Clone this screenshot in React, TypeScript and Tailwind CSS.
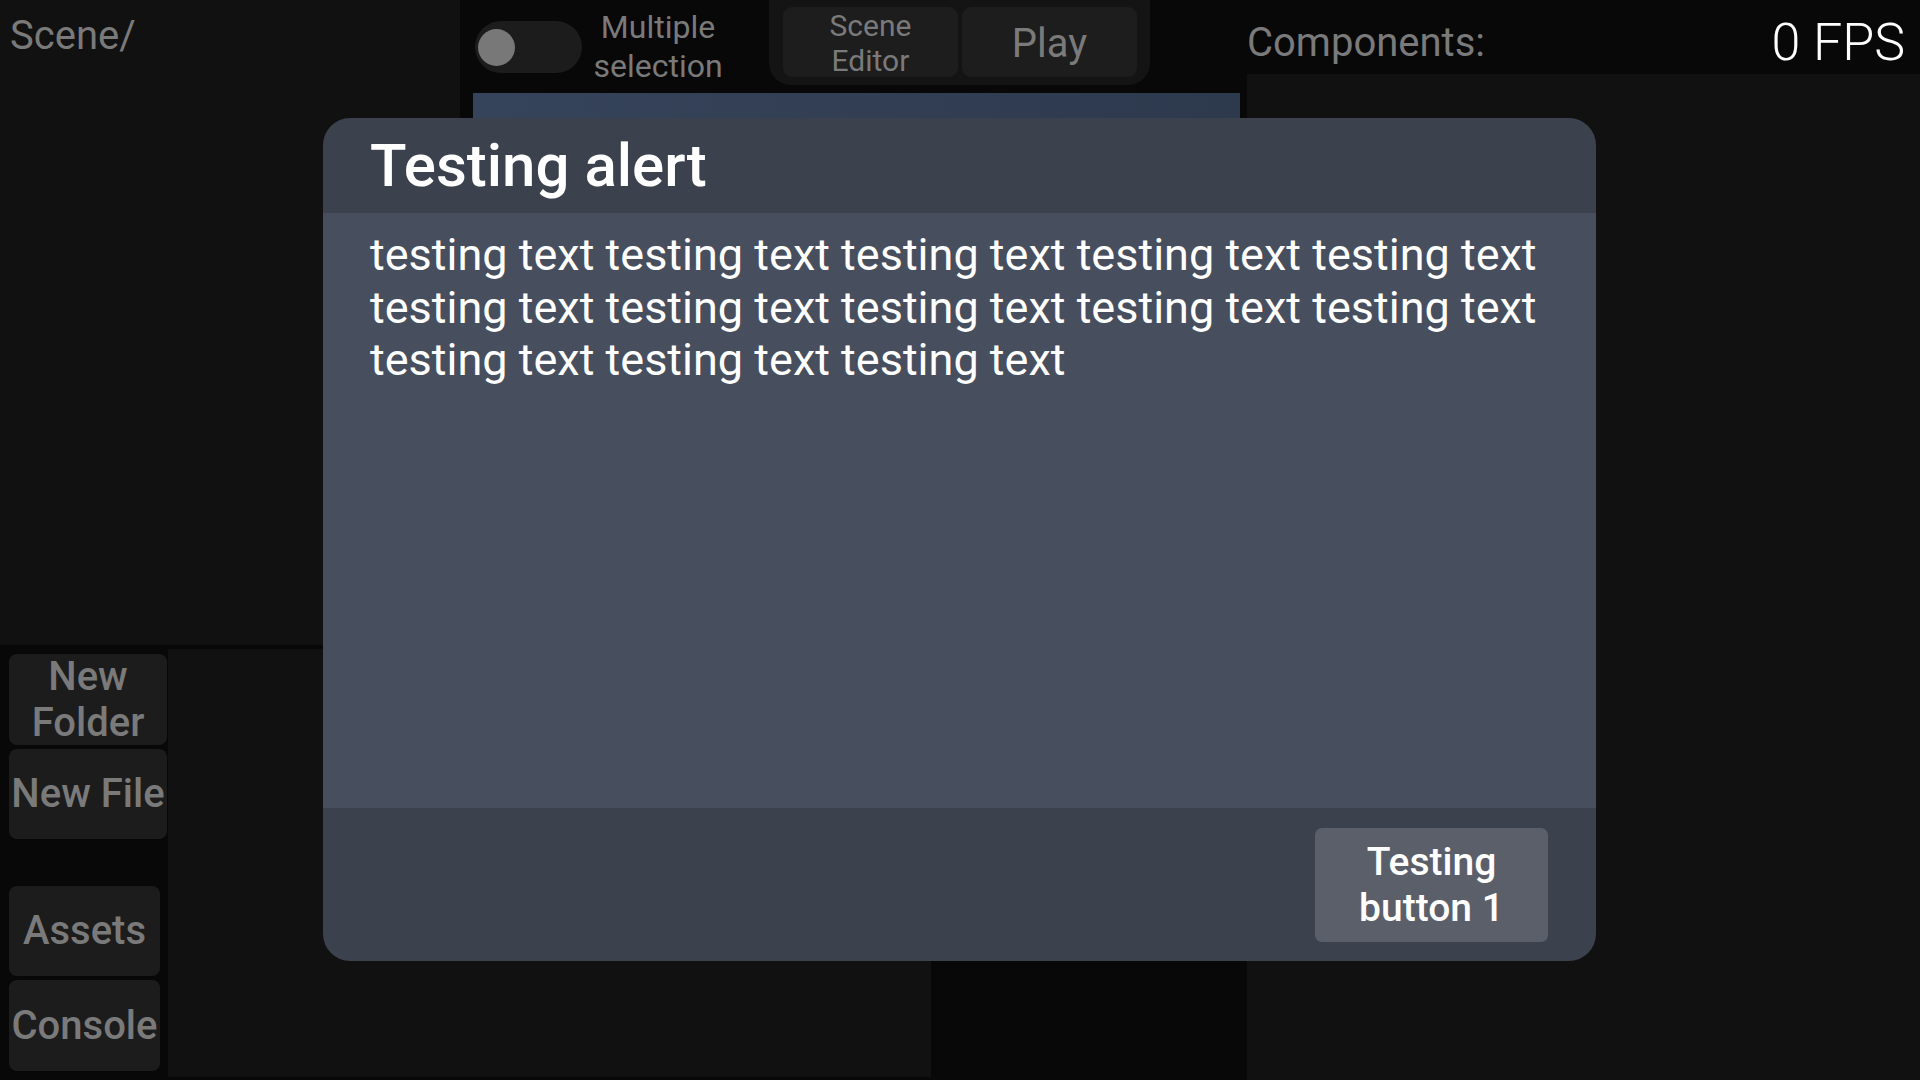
import React from "react";

export default function App() {
  const body =
    "testing text testing text testing text testing text testing text testing text testing text testing text testing text testing text testing text testing text testing text";
  return (
    <div className="relative flex h-[1080px] w-[1920px] overflow-hidden bg-[#080808] font-['Roboto',sans-serif]">
      {/* Left + center area */}
      <div className="flex w-[1245px] flex-col">
        <div className="flex h-[645px]">
          {/* Scene tree */}
          <div className="w-[460px] bg-[#111111] pl-[10px] pt-[10px] text-[40px] leading-[52px] text-[#7a7a7a]">
            Scene/
          </div>
          {/* Center column */}
          <div className="flex flex-1 flex-col pl-[13px] pr-[5px]">
            <div className="flex h-[93px] items-start">
              <div className="ml-[2px] mt-[21px] flex h-[52px] w-[107px] items-center rounded-full bg-[#1c1c1c] pl-[3px]">
                <div className="h-[37px] w-[37px] rounded-full bg-[#787878]" />
              </div>
              <div className="ml-[11px] mt-[8px] w-[130px] text-center text-[32px] leading-[39px] text-[#7a7a7a]">
                Multiple selection
              </div>
              <div className="ml-[46px] flex h-[85px] gap-[4px] rounded-b-[22px] bg-[#141414] pl-[14px] pr-[13px] pt-[7px] pb-[8px]">
                <div className="flex w-[175px] items-center justify-center rounded-[9px] bg-[#1d1d1d] pt-[1px] text-center text-[30px] leading-[35px] text-[#7a7a7a]">
                  Scene
                  <br />
                  Editor
                </div>
                <div className="flex w-[175px] items-center justify-center rounded-[9px] bg-[#1d1d1d] pt-[3px] text-[40px] text-[#7a7a7a]">
                  Play
                </div>
              </div>
            </div>
            <div className="flex-1 bg-linear-to-r from-[#36445b] to-[#2d394d]" />
          </div>
        </div>
        <div className="mt-[4px] flex flex-1 pb-[3px]">
          {/* Sidebar */}
          <div className="flex w-[168px] flex-col pl-[9px] pt-[5px]">
            <div className="flex h-[91px] w-[158px] items-center justify-center rounded-[8px] bg-[#1c1c1c] text-center text-[40px] font-medium leading-[46px] text-[#7a7a7a]">
              New
              <br />
              Folder
            </div>
            <div className="mt-[4px] flex h-[90px] w-[158px] items-center justify-center rounded-[8px] bg-[#1c1c1c] text-[40px] font-medium text-[#7a7a7a]">
              New File
            </div>
            <div className="mt-[47px] flex h-[90px] w-[151px] items-center justify-center rounded-[8px] bg-[#1c1c1c] text-[40px] font-medium text-[#7a7a7a]">
              Assets
            </div>
            <div className="mt-[4px] flex h-[91px] w-[151px] items-center justify-center rounded-[8px] bg-[#1c1c1c] text-[40px] font-medium text-[#7a7a7a]">
              Console
            </div>
          </div>
          <div className="w-[763px] bg-[#111111]" />
        </div>
      </div>

      {/* Components panel */}
      <div className="flex flex-1 flex-col">
        <div className="flex h-[74px] items-center justify-between pl-[2px] pr-[15px] pt-[12px]">
          <span className="text-[40px] text-[#7a7a7a]">Components:</span>
          <span className="text-[52px] font-light text-white">0 FPS</span>
        </div>
        <div className="ml-[2px] flex-1 bg-[#111111]" />
      </div>

      {/* Modal */}
      <div className="absolute left-[323px] top-[118px] flex h-[843px] w-[1273px] flex-col overflow-hidden rounded-[27px] bg-[#3b414d]">
        <div className="flex h-[95px] items-center px-[47px]">
          <span className="text-[60px] font-medium leading-none text-white">Testing alert</span>
        </div>
        <div className="h-[595px] bg-[#474e5d] pl-[47px] pr-[30px] pt-[16px] text-[45px] leading-[52.5px] text-white">
          {body}
        </div>
        <div className="flex flex-1 items-center justify-end pr-[48px]">
          <div className="flex h-[114px] w-[233px] items-center justify-center rounded-[7px] bg-[#5b5f6a] text-center text-[39px] font-medium leading-[46px] text-white">
            Testing
            <br />
            button 1
          </div>
        </div>
      </div>
    </div>
  );
}
